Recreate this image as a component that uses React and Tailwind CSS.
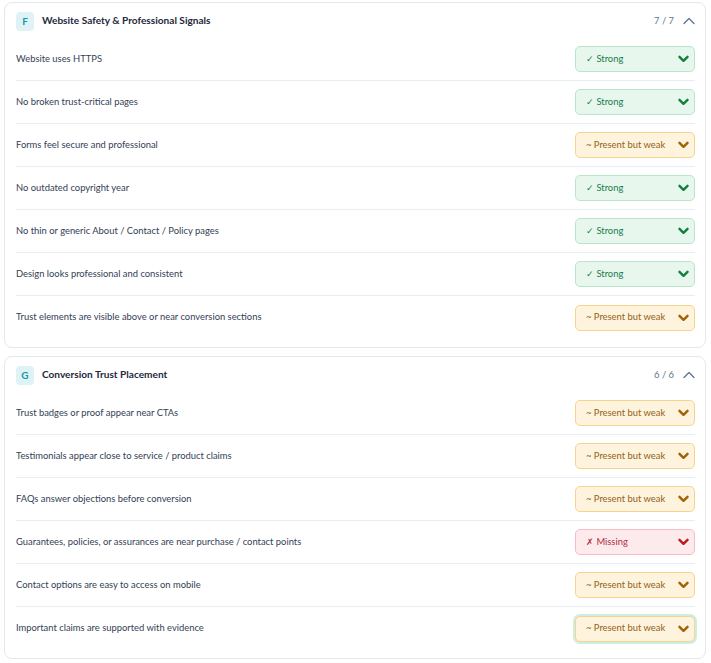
import React from "react";

const STYLES = {
  strong: {
    box: "bg-[#e7f7ee] border-[#b9e6cb] text-[#1b7a4b]",
    chev: "#15803d",
    label: "✓ Strong",
  },
  weak: {
    box: "bg-[#fef3dc] border-[#f6d48e] text-[#93621a]",
    chev: "#a16207",
    label: "~ Present but weak",
  },
  missing: {
    box: "bg-[#fdeaec] border-[#f4bcc3] text-[#b42c43]",
    chev: "#b91c1c",
    label: "✗ Missing",
  },
};

function ChevDown({ color }) {
  return (
    <svg width="11" height="8" viewBox="0 0 11 8" fill="none">
      <path d="M1.5 1.8 L5.5 5.8 L9.5 1.8" stroke={color} strokeWidth="2.4" strokeLinecap="round" strokeLinejoin="round" />
    </svg>
  );
}

function ChevUp() {
  return (
    <svg width="12" height="8" viewBox="0 0 12 8" fill="none">
      <path d="M1 6.5 L6 1.5 L11 6.5" stroke="#64748b" strokeWidth="1.3" strokeLinecap="round" strokeLinejoin="round" />
    </svg>
  );
}

function Select({ status, focus }) {
  const s = STYLES[status];
  return (
    <div
      className={
        "w-[120px] h-[26px] rounded-[5px] border flex items-center justify-between pl-[10px] pr-[5px] text-[9.4px] " +
        s.box +
        (focus ? " ring-2 ring-[#cdeee2]" : "")
      }
    >
      <span>{s.label}</span>
      <ChevDown color={s.chev} />
    </div>
  );
}

function Card({ letter, title, count, items }) {
  return (
    <div className="border border-[#e2e8f0] rounded-[8px] bg-white pl-[11px] pr-[10px] pb-[8px]">
      <div className="h-[35px] flex items-center justify-between pt-[1px]">
        <div className="flex items-center gap-[8px]">
          <div className="w-[18px] h-[19px] rounded-[4px] bg-[#dff3f6] text-[#1596a8] text-[10px] font-bold flex items-center justify-center">
            {letter}
          </div>
          <div className="text-[10.1px] font-bold text-[#1e293b]">{title}</div>
        </div>
        <div className="flex items-center gap-[9px] pt-[1px]">
          <span className="text-[9.4px] text-[#64748b]">{count}</span>
          <ChevUp />
        </div>
      </div>
      <div>
        {items.map((it, i) => (
          <div
            key={i}
            className={
              "h-[43px] flex items-center justify-between " +
              (i < items.length - 1 ? "border-b border-[#e8edf3]" : "")
            }
          >
            <span className="text-[9.4px] text-[#334155]">{it[0]}</span>
            <Select status={it[1]} focus={it[2]} />
          </div>
        ))}
      </div>
    </div>
  );
}

export default function App() {
  return (
    <div
      className="w-[711px] h-[663px] bg-white pt-[2px] pl-[4px] pr-[5px] flex flex-col gap-[8px]"
      style={{ fontFamily: 'Lato, "Noto Sans", sans-serif' }}
    >
      <Card
        letter="F"
        title="Website Safety & Professional Signals"
        count="7 / 7"
        items={[
          ["Website uses HTTPS", "strong"],
          ["No broken trust-critical pages", "strong"],
          ["Forms feel secure and professional", "weak"],
          ["No outdated copyright year", "strong"],
          ["No thin or generic About / Contact / Policy pages", "strong"],
          ["Design looks professional and consistent", "strong"],
          ["Trust elements are visible above or near conversion sections", "weak"],
        ]}
      />
      <Card
        letter="G"
        title="Conversion Trust Placement"
        count="6 / 6"
        items={[
          ["Trust badges or proof appear near CTAs", "weak"],
          ["Testimonials appear close to service / product claims", "weak"],
          ["FAQs answer objections before conversion", "weak"],
          ["Guarantees, policies, or assurances are near purchase / contact points", "missing"],
          ["Contact options are easy to access on mobile", "weak"],
          ["Important claims are supported with evidence", "weak", true],
        ]}
      />
    </div>
  );
}
